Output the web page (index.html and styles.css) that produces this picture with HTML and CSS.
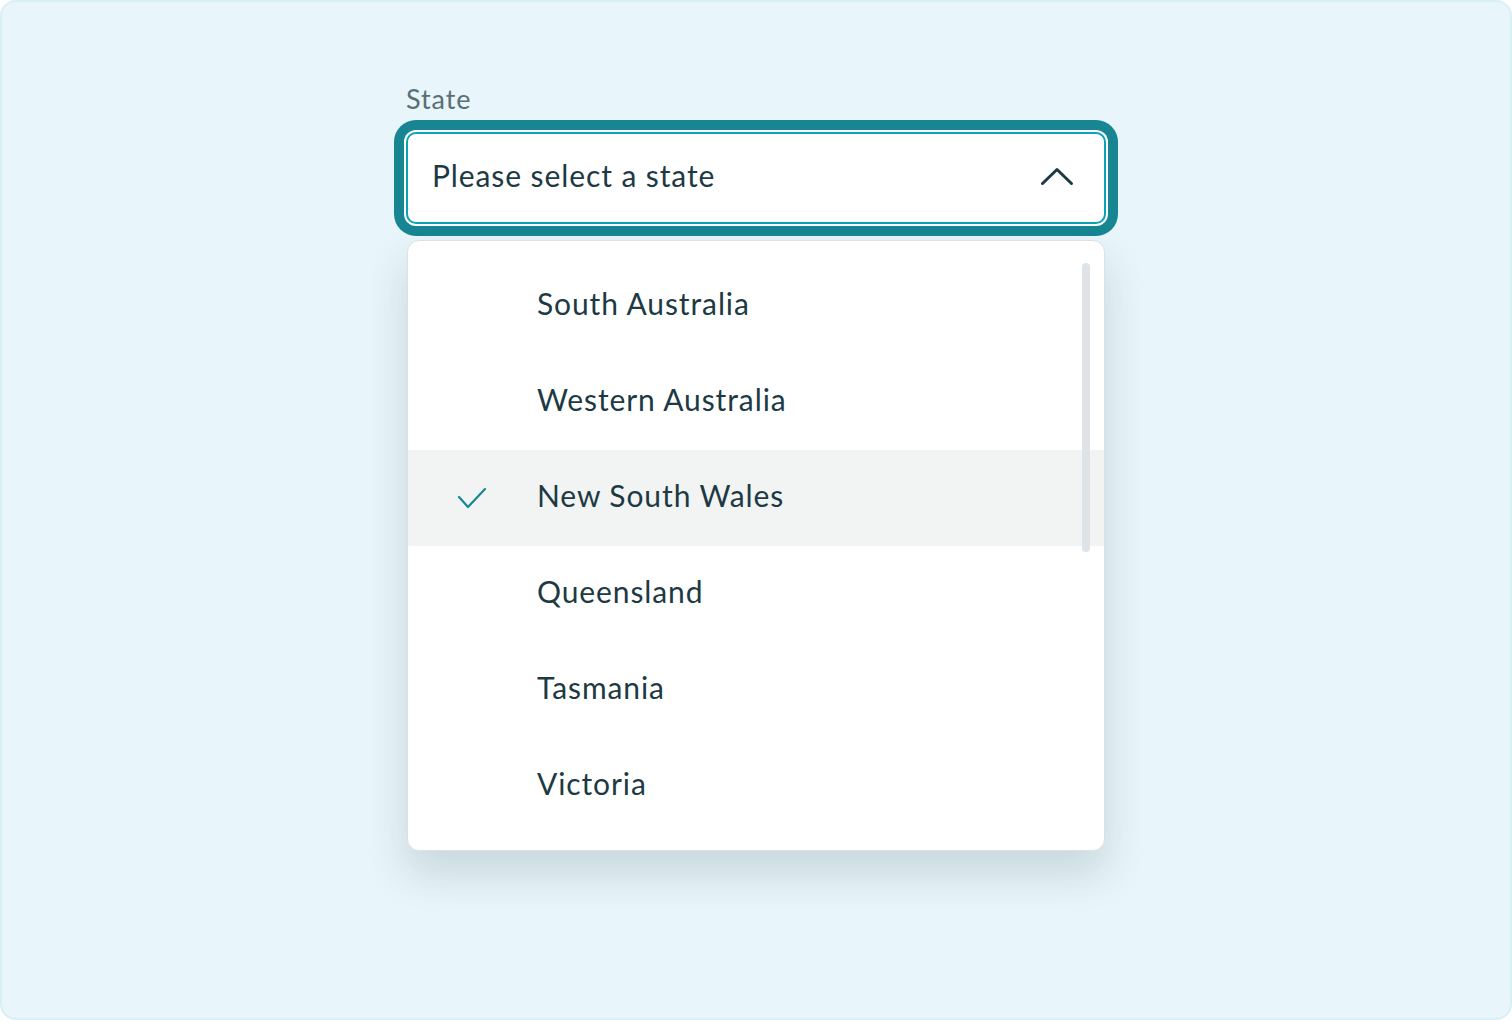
FILE: index.html
```html
<!DOCTYPE html>
<html lang="en">
<head>
<meta charset="utf-8">
<title>State select</title>
<link rel="stylesheet" href="styles.css">
</head>
<body>
<div class="frame">
  <div class="field">
    <label class="label">State</label>
    <div class="select">
      <span class="select-text">Please select a state</span>
      <svg class="chevron" width="34" height="20" viewBox="0 0 34 20" aria-hidden="true">
        <path d="M2.5 17.5 L17 3.5 L31.5 17.5" fill="none" stroke="#1d3a44" stroke-width="3" stroke-linecap="round" stroke-linejoin="round"/>
      </svg>
    </div>
    <div class="menu">
      <div class="scrollbar"></div>
      <ul class="options">
        <li class="option">South Australia</li>
        <li class="option">Western Australia</li>
        <li class="option selected">
          <svg class="check" width="32" height="24" viewBox="0 0 32 24" aria-hidden="true">
            <path d="M2 11 L11 21 L28 3" fill="none" stroke="#178692" stroke-width="2.2" stroke-linecap="round" stroke-linejoin="round"/>
          </svg>
          New South Wales
        </li>
        <li class="option">Queensland</li>
        <li class="option">Tasmania</li>
        <li class="option">Victoria</li>
      </ul>
    </div>
  </div>
</div>
</body>
</html>
```

FILE: styles.css
```css
* { box-sizing: border-box; }
html, body { margin: 0; padding: 0; }
body {
  font-family: Lato, "Noto Sans", sans-serif;
  color: #1d3a44;
  background: #ffffff;
  letter-spacing: 0.9px;
}
.frame {
  width: 1512px;
  height: 1020px;
  background: #e8f5fa;
  border: 2px solid #d9eff6;
  border-radius: 16px;
  padding-top: 80px;
}
.field {
  width: 700px;
  margin: 0 auto;
}
.label {
  display: block;
  font-size: 27px;
  line-height: 34px;
  color: #5a6f75;
  margin-bottom: 16px;
}
.select {
  height: 92px;
  background: #ffffff;
  border: 2px solid #0aa2b8;
  border-radius: 10px;
  box-shadow: 0 0 0 2px #ffffff, 0 0 0 12px #178692;
  display: flex;
  align-items: center;
  justify-content: space-between;
  padding: 0 30px 6px 24px;
}
.select-text {
  font-size: 30px;
  color: #1d3a44;
}
.chevron { display: block; margin-top: 1px; }
.menu {
  position: relative;
  margin: 16px 1px 0;
  background: #ffffff;
  border: 1px solid #dbe2e5;
  border-radius: 12px;
  box-shadow: 0 22px 40px rgba(40, 70, 80, 0.17);
  padding: 17px 0 16px;
  overflow: hidden;
}
.options {
  list-style: none;
  margin: 0;
  padding: 0;
}
.option {
  position: relative;
  height: 96px;
  display: flex;
  align-items: center;
  padding-left: 129px;
  padding-bottom: 6px;
  font-size: 30px;
  color: #1d3a44;
}
.option.selected { background: #f1f4f3; }
.check {
  position: absolute;
  left: 49px;
  top: 36px;
}
.scrollbar {
  position: absolute;
  right: 14px;
  top: 22px;
  width: 8px;
  height: 289px;
  border-radius: 4px;
  background: #dde3e6;
  z-index: 2;
}
```
